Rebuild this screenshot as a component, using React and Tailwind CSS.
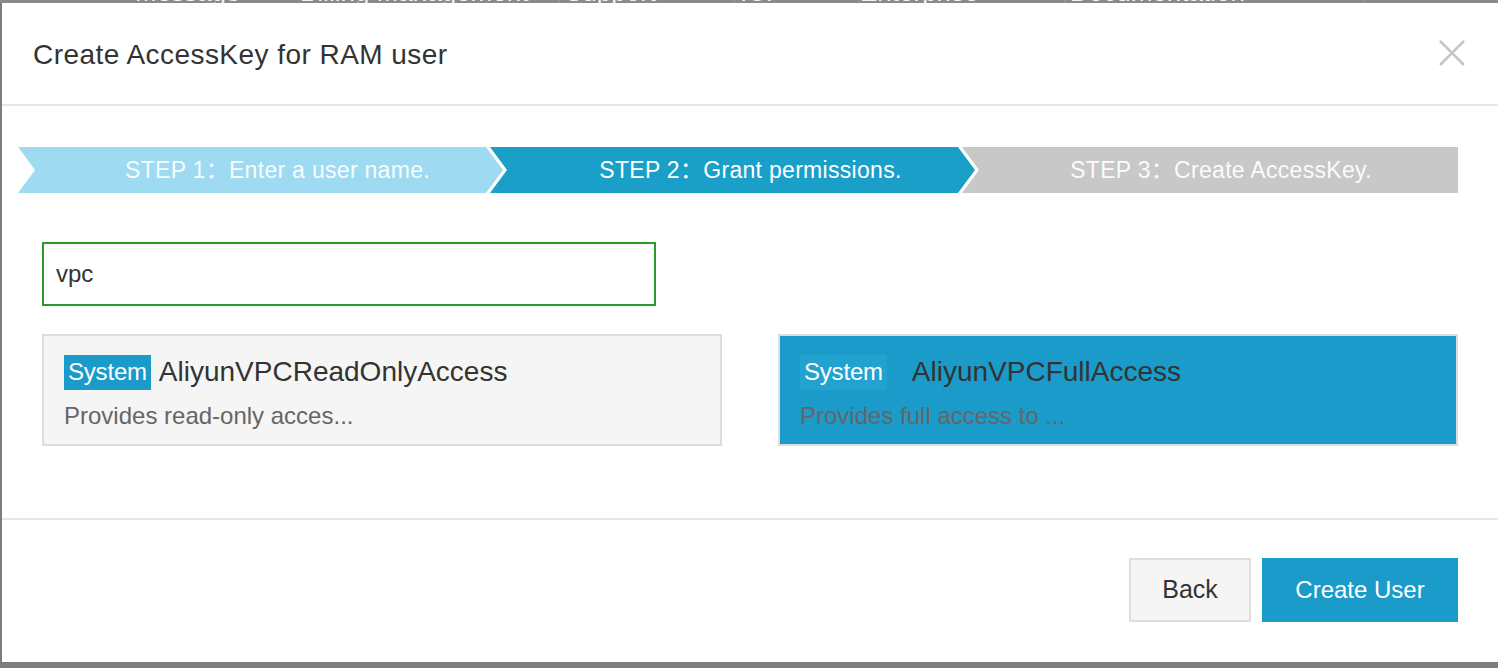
import React from "react";

const font = { fontFamily: '"Liberation Sans", Arial, "Noto Sans CJK SC", sans-serif' };

const navItems = [
  { label: "Message", w: "w-[230px]", pl: "pl-[135px]" },
  { label: "Billing Management", w: "w-[330px]", pl: "pl-[70px]" },
  { label: "Support", w: "w-[175px]", pl: "pl-[5px]" },
  { label: "ICP", w: "w-[125px]", pl: "pl-[5px]" },
  { label: "Enterprise", w: "w-[205px]", pl: "pl-[0px]" },
  { label: "Documentation", w: "w-[300px]", pl: "pl-[5px]" },
];

const steps = [
  {
    text: "STEP 1：Enter a user name.",
    cls: "w-[485px] pl-[34px] bg-[#9edbf2] text-white/95",
    clip: "[clip-path:polygon(0_0,calc(100%-17px)_0,100%_50%,calc(100%-17px)_100%,0_100%,17px_50%)]",
  },
  {
    text: "STEP 2：Grant permissions.",
    cls: "w-[485px] pl-[36px] -ml-[13px] bg-[#1a9fc8] text-white",
    clip: "[clip-path:polygon(0_0,calc(100%-17px)_0,100%_50%,calc(100%-17px)_100%,0_100%,17px_50%)]",
  },
  {
    text: "STEP 3：Create AccessKey.",
    cls: "w-[496px] pl-[22px] -ml-[13px] bg-[#c8c8c8] text-white/95",
    clip: "[clip-path:polygon(0_0,100%_0,100%_100%,0_100%,17px_50%)]",
  },
];

function PolicyCard({ name, desc, selected }) {
  return (
    <div
      className={`w-[680px] h-[112px] border-2 border-[#dedede] px-[20px] pt-[18px] ${
        selected ? "bg-[#1a9bc9]" : "bg-[#f5f5f5]"
      }`}
    >
      <div className="flex items-center h-[36px]">
        <span
          className={`h-[35px] px-[4px] flex items-center text-[24px] text-white tracking-[-0.2px] ${
            selected ? "bg-[#22a3cf]" : "bg-[#1a9bc9]"
          }`}
        >
          System
        </span>
        <span className={`text-[28px] text-[#333] ${selected ? "ml-[25px]" : "ml-[8px]"}`}>{name}</span>
      </div>
      <div className="mt-[12px] text-[24px] text-[#666] leading-[28px]">{desc}</div>
    </div>
  );
}

export default function App() {
  return (
    <div className="w-[1498px] h-[668px] bg-[#7d7d7d] overflow-hidden relative" style={font}>
      {/* Page nav behind the dialog, mostly covered */}
      <div className="h-[3px] overflow-hidden bg-[#8a8a8a]">
        <div className="flex -mt-[20px] h-[24px] items-end text-[26px] leading-[24px] text-white/90">
          {navItems.map((n) => (
            <div key={n.label} className={`${n.w} ${n.pl} whitespace-nowrap border-r border-[#9a9a9a]`}>
              {n.label}
            </div>
          ))}
        </div>
      </div>

      {/* Dialog */}
      <div className="ml-[2px] h-[659px] bg-white flex flex-col">
        {/* Header */}
        <div className="h-[103px] shrink-0 flex items-center justify-between pl-[31px] pr-[32px] border-b-2 border-[#e6e6e6]">
          <h1 className="text-[28px] text-[#333] tracking-[0.45px] pt-[2px]">Create AccessKey for RAM user</h1>
          <svg width="28" height="28" viewBox="0 0 28 28" className="-mt-[2px]">
            <path d="M2 2 L26 26 M26 2 L2 26" stroke="#c6c6c6" strokeWidth="2.6" fill="none" />
          </svg>
        </div>

        {/* Body */}
        <div className="h-[414px] shrink-0 border-b-2 border-[#e6e6e6] pl-[16px] pt-[41px]">
          <div className="flex h-[46px]">
            {steps.map((s) => (
              <div
                key={s.text}
                className={`${s.cls} ${s.clip} h-[46px] flex items-center justify-center text-[23px] tracking-[0.3px]`}
              >
                {s.text}
              </div>
            ))}
          </div>

          <div className="ml-[24px] mt-[49px] w-[614px] h-[64px] border-2 border-[#2a9a2a] flex items-center pl-[12px] text-[24px] text-[#333] shadow-[inset_0_1px_2px_rgba(0,0,0,0.06)]">
            vpc
          </div>

          <div className="ml-[24px] mt-[28px] flex gap-[56px]">
            <PolicyCard name="AliyunVPCReadOnlyAccess" desc="Provides read-only acces..." />
            <PolicyCard name="AliyunVPCFullAccess" desc="Provides full access to ..." selected />
          </div>
        </div>

        {/* Footer */}
        <div className="flex justify-end gap-[11px] pr-[40px] pt-[38px]">
          <button className="w-[122px] h-[64px] bg-[#f5f5f5] border-2 border-[#dedede] text-[25px] text-[#333]">
            Back
          </button>
          <button className="w-[196px] h-[64px] bg-[#1a9bc9] text-[24px] text-white">Create User</button>
        </div>
      </div>
    </div>
  );
}
